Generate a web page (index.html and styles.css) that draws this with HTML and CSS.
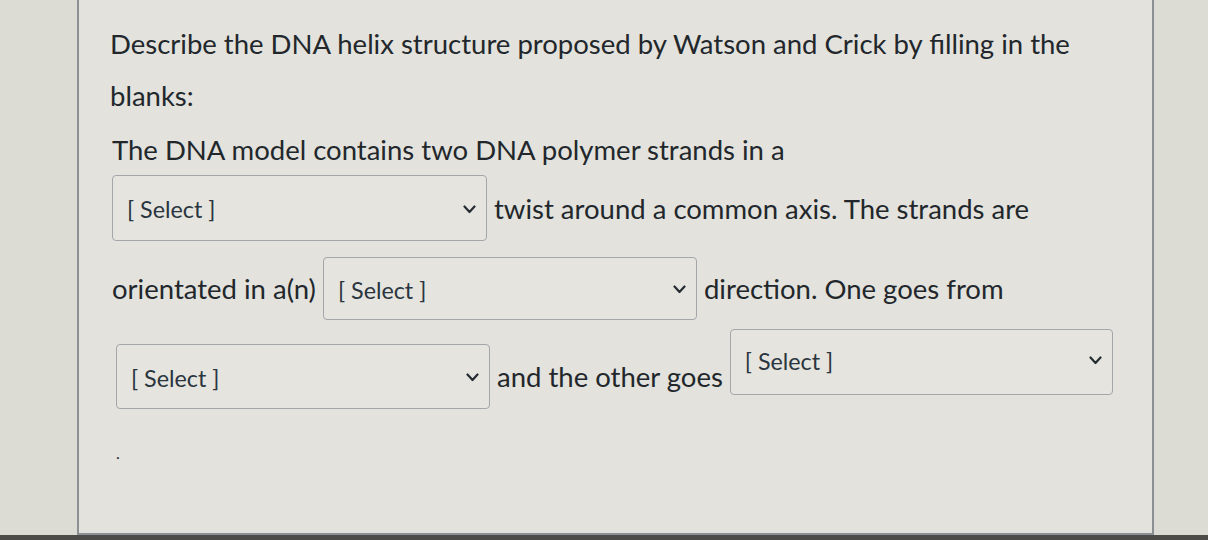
FILE: index.html
```html
<!DOCTYPE html>
<html lang="en">
<head>
<meta charset="utf-8">
<title>DNA helix question</title>
<link rel="stylesheet" href="styles.css">
</head>
<body>
<div class="page">
  <div class="panel">
    <div class="content">
      <p class="prompt">Describe the DNA helix structure proposed by Watson and Crick by filling in the blanks:</p>
      <p class="lead">The DNA model contains two DNA polymer strands in a</p>
      <div class="row row-1">
        <div class="select s1"><span class="select-label">[ Select ]</span><svg class="chev" viewBox="0 0 13 9" width="13" height="9"><path d="M1.5 1.5 L6.5 7 L11.5 1.5" fill="none" stroke="#262c33" stroke-width="2.2" stroke-linecap="round" stroke-linejoin="round"/></svg></div>
        <span class="txt">twist around a common axis. The strands are</span>
      </div>
      <div class="row row-2">
        <span class="txt">orientated in a(n)</span>
        <div class="select s2"><span class="select-label">[ Select ]</span><svg class="chev" viewBox="0 0 13 9" width="13" height="9"><path d="M1.5 1.5 L6.5 7 L11.5 1.5" fill="none" stroke="#262c33" stroke-width="2.2" stroke-linecap="round" stroke-linejoin="round"/></svg></div>
        <span class="txt">direction. One goes from</span>
      </div>
      <div class="row row-3">
        <div class="select s3"><span class="select-label">[ Select ]</span><svg class="chev" viewBox="0 0 13 9" width="13" height="9"><path d="M1.5 1.5 L6.5 7 L11.5 1.5" fill="none" stroke="#262c33" stroke-width="2.2" stroke-linecap="round" stroke-linejoin="round"/></svg></div>
        <span class="txt">and the other goes</span>
        <div class="select s4"><span class="select-label">[ Select ]</span><svg class="chev" viewBox="0 0 13 9" width="13" height="9"><path d="M1.5 1.5 L6.5 7 L11.5 1.5" fill="none" stroke="#262c33" stroke-width="2.2" stroke-linecap="round" stroke-linejoin="round"/></svg></div>
      </div>
      <p class="dot">.</p>
    </div>
  </div>
  <div class="edge"></div>
</div>
</body>
</html>
```
FILE: styles.css
```css
html, body {
  margin: 0;
  padding: 0;
}
body {
  background: #dcdbd4;
  font-family: Lato, "Open Sans", sans-serif;
  color: #22272c;
}
.page {
  width: 1208px;
  height: 540px;
  display: flex;
  flex-direction: column;
  overflow: hidden;
}
.panel {
  margin-left: 77px;
  width: 1077px;
  height: 535px;
  box-sizing: border-box;
  background: #e3e2dc;
  border-left: 2px solid #8c8f93;
  border-right: 2px solid #8c8f93;
  border-bottom: 2px solid #8c8f93;
  flex: none;
}
.edge {
  flex: 1;
  background: #4d4c49;
}
.content {
  padding: 18px 0 0 31px;
}
.prompt {
  margin: 0;
  width: 990px;
  font-size: 27.5px;
  line-height: 52px;
}
.lead {
  margin: 4px 0 0 2px;
  font-size: 27.5px;
  line-height: 48px;
}
.row {
  display: flex;
  align-items: center;
  gap: 7px;
  font-size: 27.5px;
}
.row-1 {
  margin: 1px 0 0 2px;
}
.row-2 {
  margin: 16px 0 0 2px;
}
.row-3 {
  margin: 24px 0 0 6px;
}
.select {
  box-sizing: border-box;
  display: flex;
  align-items: center;
  justify-content: space-between;
  border: 1.5px solid #a3a7ab;
  border-radius: 4px;
  background: #e5e4de;
  padding: 2px 10px 0 14px;
  font-size: 23.3px;
  color: #2a3540;
  flex: none;
}
.s1 { width: 375px; height: 66px; }
.s2 { width: 374px; height: 63px; }
.s3 { width: 374px; height: 65px; }
.s4 { width: 383px; height: 66px; margin-top: -30px; padding-bottom: 4px; }
.chev {
  display: block;
}
.txt {
  white-space: nowrap;
}
.dot {
  margin: 34px 0 0 6px;
  font-size: 16px;
  line-height: 20px;
}
```
